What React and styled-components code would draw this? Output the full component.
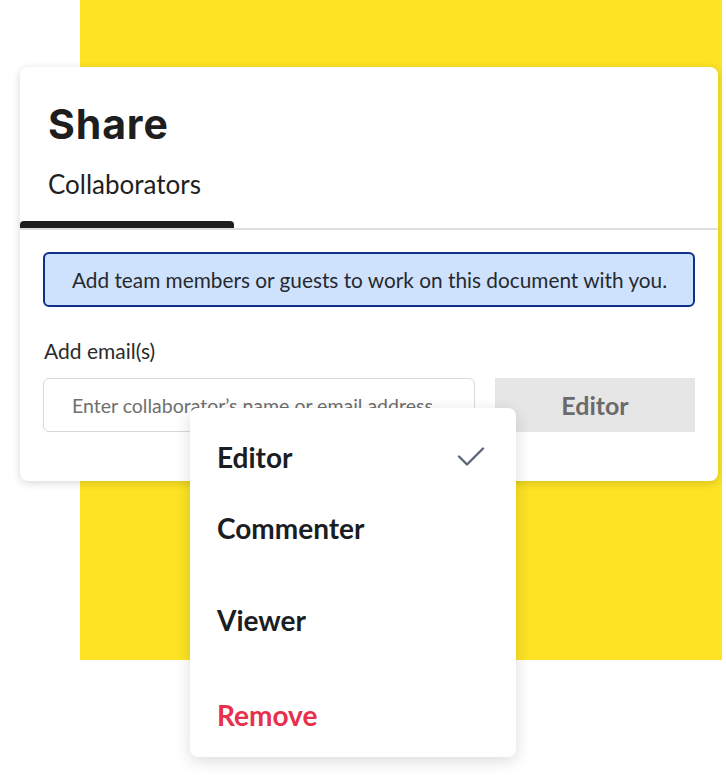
import React from 'react';
import styled, { createGlobalStyle } from 'styled-components';

const GlobalStyle = createGlobalStyle`
  body {
    margin: 0;
    background: #ffffff;
    font-family: Lato, "Noto Sans", sans-serif;
  }
`;

const Stage = styled.div`
  position: relative;
  width: 726px;
  height: 777px;
  overflow: hidden;
  padding-top: 67px;
  padding-left: 20px;
  box-sizing: border-box;
`;

const Backdrop = styled.div`
  position: absolute;
  left: 80px;
  top: 0;
  width: 642px;
  height: 660px;
  background: #fde323;
`;

const Card = styled.div`
  position: relative;
  width: 698px;
  height: 414px;
  background: #ffffff;
  border-radius: 8px;
  box-shadow: rgba(0, 0, 0, 0.16) 0px 2px 8px;
  display: flex;
  flex-direction: column;
`;

const Title = styled.h1`
  margin: 0;
  padding: 33px 0 0 28px;
  font-family: Inter, sans-serif;
  font-size: 41px;
  line-height: 48px;
  font-weight: 700;
  letter-spacing: 0.9px;
  color: #1e1e1e;
`;

const Tabs = styled.div`
  display: flex;
  border-bottom: 2px solid #dedede;
  margin-top: 21px;
`;

const Tab = styled.div`
  width: 214px;
  box-sizing: border-box;
  padding: 0 0 0 28px;
  font-size: 26px;
  line-height: 30px;
  color: #1e1e1e;
  &::after {
    content: '';
    display: block;
    margin-left: -28px;
    margin-top: 22px;
    height: 7px;
    background: #1e1e1e;
    border-radius: 4px 4px 0 0;
  }
`;

const Body = styled.div`
  padding: 22px 23px 0 23px;
  display: flex;
  flex-direction: column;
`;

const Notice = styled.div`
  height: 55px;
  box-sizing: border-box;
  border: 2px solid #12308a;
  border-radius: 6px;
  background: #cfe2fd;
  display: flex;
  align-items: center;
  padding-left: 27px;
  font-size: 20.8px;
  color: #262a30;
`;

const Label = styled.div`
  margin-top: 32px;
  padding-left: 1px;
  font-size: 21px;
  line-height: 24px;
  color: #2b2b2b;
`;

const InputRow = styled.div`
  display: flex;
  gap: 20px;
  margin-top: 15px;
`;

const EmailInput = styled.input`
  width: 432px;
  height: 54px;
  box-sizing: border-box;
  border: 1px solid #d8d8d8;
  border-radius: 6px;
  padding: 0 0 0 28px;
  font-family: Lato, "Noto Sans", sans-serif;
  font-size: 19.5px;
  outline: none;
  &::placeholder {
    color: #6f6f6f;
  }
`;

const RoleButton = styled.button`
  width: 200px;
  height: 54px;
  border: none;
  background: #e6e6e6;
  font-family: Lato, "Noto Sans", sans-serif;
  font-size: 25px;
  font-weight: 700;
  color: #6a6a6a;
`;

const Menu = styled.div`
  position: absolute;
  left: 170px;
  top: 341px;
  width: 326px;
  height: 349px;
  background: #ffffff;
  border-radius: 8px;
  box-shadow: rgba(0, 0, 0, 0.14) 0px 4px 16px;
  padding-top: 14px;
  box-sizing: border-box;
  display: flex;
  flex-direction: column;
`;

const MenuItem = styled.div`
  height: ${(p) => p.$h}px;
  display: flex;
  align-items: center;
  justify-content: space-between;
  padding: 0 31px 0 27px;
  font-size: 28px;
  font-weight: 700;
  color: ${(p) => (p.$danger ? '#e8304c' : '#1a1d21')};
`;

const Check = () => (
  <svg width="28" height="20" viewBox="0 0 28 20" fill="none">
    <path d="M2 9.5 L10 17.5 L26 1.5" stroke="#5b6577" strokeWidth="2.4" strokeLinecap="round" strokeLinejoin="round" />
  </svg>
);

const App = () => (
  <>
    <GlobalStyle />
    <Stage>
      <Backdrop />
      <Card>
        <Title>Share</Title>
        <Tabs>
          <Tab>Collaborators</Tab>
        </Tabs>
        <Body>
          <Notice>Add team members or guests to work on this document with you.</Notice>
          <Label>Add email(s)</Label>
          <InputRow>
            <EmailInput placeholder="Enter collaborator’s name or email address" />
            <RoleButton>Editor</RoleButton>
          </InputRow>
        </Body>
        <Menu>
          <MenuItem $h={70}>
            Editor
            <Check />
          </MenuItem>
          <MenuItem $h={72}>Commenter</MenuItem>
          <MenuItem $h={112}>Viewer</MenuItem>
          <MenuItem $h={78} $danger>Remove</MenuItem>
        </Menu>
      </Card>
    </Stage>
  </>
);

export default App;
